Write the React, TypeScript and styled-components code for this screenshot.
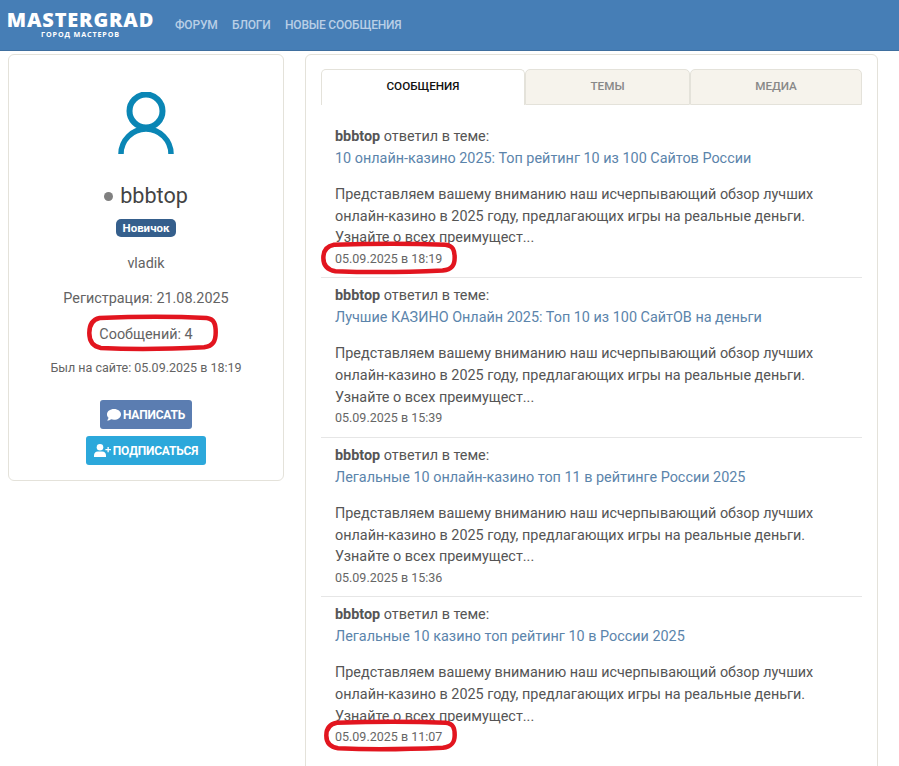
import React from "react";
import styled, { createGlobalStyle } from "styled-components";

const GlobalStyle = createGlobalStyle`
html, body {
  margin: 0;
  padding: 0;
  height: 100%;
  overflow: hidden;
  background: #fff;
}
body {
  font-family: Roboto, "Liberation Sans", sans-serif;
  font-size: 14.4px;
  line-height: 1.5;
  color: #555;
}
* { box-sizing: border-box; }
`;

const Header = styled.header`
  height: 51px;
  background: #467eb6;
  border-bottom: 1px solid #3f6f9f;
  display: flex;
  align-items: flex-start;
  padding-left: 8px;
`;

const Logo = styled.div`
  width: 145px;
  margin-right: 22px;
  padding-top: 10px;
  display: flex;
  flex-direction: column;
  align-items: center;
  color: #fff;
  font-family: "Open Sans", sans-serif;
`;

const LogoName = styled.span`
  font-size: 20px;
  line-height: 20px;
  font-weight: 800;
  letter-spacing: 0.8px;
`;

const LogoTag = styled.span`
  font-size: 7.2px;
  line-height: 9px;
  font-weight: 700;
  letter-spacing: 0.85px;
`;

const Nav = styled.nav`
  display: flex;
  gap: 14.5px;
  padding-top: 16px;
`;

const NavLink = styled.a`
  color: #b9cfe6;
  font-size: 12px;
  line-height: 18px;
  font-weight: 500;
  letter-spacing: -0.2px;
`;

const Page = styled.main`
  display: grid;
  grid-template-columns: 276px 573px;
  column-gap: 21px;
  align-items: start;
  padding: 3px 0 0 8px;
`;

const Card = styled.section`
  background: #fff;
  border: 1px solid #e4e2da;
  border-radius: 6px;
`;

const ProfileCard = styled(Card)`
  height: 427px;
  padding-top: 37px;
  display: flex;
  flex-direction: column;
  align-items: center;
  text-align: center;
  color: #636363;
`;

const Avatar = styled.svg`
  width: 56px;
  height: 62px;
  display: block;
`;

const NameRow = styled.div`
  margin-top: 26px;
  display: flex;
  align-items: center;
  gap: 7px;
  color: #444;
  font-size: 21.6px;
  line-height: 32px;
`;

const StatusDot = styled.span`
  width: 9px;
  height: 9px;
  border-radius: 50%;
  background: #808080;
`;

const Rank = styled.span`
  margin-top: 7px;
  padding: 0 6.5px;
  height: 18px;
  background: #355f8c;
  border-radius: 5px;
  color: #fff;
  font-size: 11.5px;
  line-height: 18px;
  font-weight: 700;
`;

const InfoLine = styled.div<{ $gap: number }>`
  margin-top: ${(p) => p.$gap}px;
  line-height: 22px;
`;

const LastSeen = styled.div`
  margin-top: 12px;
  font-size: 12.5px;
  line-height: 20px;
`;

const Marked = styled.span`
  position: relative;
  display: inline-block;
`;

const Ring = styled.svg<{ $l: number; $t: number; $w: number; $h: number }>`
  position: absolute;
  left: ${(p) => p.$l}px;
  top: ${(p) => p.$t}px;
  width: ${(p) => p.$w}px;
  height: ${(p) => p.$h}px;
  overflow: visible;
  pointer-events: none;
`;

const ActionButton = styled.a<{ $bg: string; $w: number; $mt: number }>`
  margin-top: ${(p) => p.$mt}px;
  width: ${(p) => p.$w}px;
  height: 29px;
  display: flex;
  align-items: center;
  justify-content: center;
  gap: 2px;
  background: ${(p) => p.$bg};
  border-radius: 3px;
  color: #fff;
  font-size: 12px;
  font-weight: 700;
  letter-spacing: -0.2px;
  svg { display: block; }
`;

const FeedCard = styled(Card)`
  height: 760px;
  padding: 14px 15px 0;
`;

const Tabs = styled.div`
  display: grid;
  grid-template-columns: 204px 165px 172px;
  height: 36px;
`;

const Tab = styled.div<{ $active?: boolean }>`
  text-align: center;
  font-size: 11.7px;
  line-height: 32px;
  font-weight: 500;
  border: 1px solid #e4e2da;
  border-bottom-width: ${(p) => (p.$active ? 0 : 1)}px;
  border-radius: 5px 5px 0 0;
  background: ${(p) => (p.$active ? "#fff" : "#f6f3ec")};
  color: ${(p) => (p.$active ? "#111" : "#888")};
`;

const Post = styled.article<{ $last?: boolean }>`
  padding: 7px 14px 9px;
  border-bottom: ${(p) => (p.$last ? "none" : "1px solid #e6e6e6")};
  &:first-of-type { padding-top: 21px; }
`;

const FirstLine = styled.div`
  line-height: 22px;
`;

const PostTitle = styled.a`
  display: block;
  color: #5b84ab;
  line-height: 22px;
`;

const PostText = styled.p`
  margin: 14px 0 0;
  line-height: 21.6px;
  color: #555;
`;

const PostDate = styled.div`
  font-size: 12.5px;
  line-height: 19.7px;
  color: #666;
`;

type RingBox = { l: number; t: number; w: number; h: number };
type PostData = { title: string; date: string; ring?: RingBox };

const posts: PostData[] = [
  { title: "10 онлайн-казино 2025: Топ рейтинг 10 из 100 Сайтов России", date: "05.09.2025 в 18:19", ring: { l: -13, t: -6, w: 134, h: 30 } },
  { title: "Лучшие КАЗИНО Онлайн 2025: Топ 10 из 100 СайтОВ на деньги", date: "05.09.2025 в 15:39" },
  { title: "Легальные 10 онлайн-казино топ 11 в рейтинге России 2025", date: "05.09.2025 в 15:36" },
  { title: "Легальные 10 казино топ рейтинг 10 в России 2025", date: "05.09.2025 в 11:07", ring: { l: -10, t: -6, w: 131, h: 29 } },
];

const excerpt =
  "Представляем вашему вниманию наш исчерпывающий обзор лучших онлайн-казино в 2025 году, предлагающих игры на реальные деньги. Узнайте о всех преимущест...";

// hand-drawn marker loop, stretched to whatever box it circles
function RedRing({ box }: { box: RingBox }) {
  return (
    <Ring $l={box.l} $t={box.t} $w={box.w} $h={box.h} viewBox="0 0 100 100" preserveAspectRatio="none" fill="none">
      <path
        d="M9 6 C35 2 70 2 92 6 C98 9 99 25 99 48 C99 74 97 88 90 92 C60 98 30 98 10 94 C3 89 1 70 1 50 C1 28 3 11 9 6 Z"
        stroke="#e2151f"
        strokeWidth="4.5"
        vectorEffect="non-scaling-stroke"
      />
    </Ring>
  );
}

export default function App() {
  return (
    <>
      <GlobalStyle />
      <Header>
        <Logo>
          <LogoName>MASTERGRAD</LogoName>
          <LogoTag>ГОРОД МАСТЕРОВ</LogoTag>
        </Logo>
        <Nav>
          <NavLink>ФОРУМ</NavLink>
          <NavLink>БЛОГИ</NavLink>
          <NavLink>НОВЫЕ СООБЩЕНИЯ</NavLink>
        </Nav>
      </Header>
      <Page>
        <ProfileCard>
          <Avatar viewBox="0 0 56 62" fill="none" stroke="#0a86b5">
            <circle cx="28" cy="19" r="16.5" strokeWidth="6" />
            <path d="M3 62 A25 25 0 0 1 53 62" strokeWidth="5.5" />
          </Avatar>
          <NameRow>
            <StatusDot />
            bbbtop
          </NameRow>
          <Rank>Новичок</Rank>
          <InfoLine $gap={16}>vladik</InfoLine>
          <InfoLine $gap={13}>Регистрация: 21.08.2025</InfoLine>
          <InfoLine $gap={14}>
            <Marked>
              Сообщений: 4
              <RedRing box={{ l: -11, t: -8, w: 129, h: 34 }} />
            </Marked>
          </InfoLine>
          <LastSeen>Был на сайте: 05.09.2025 в 18:19</LastSeen>
          <ActionButton $bg="#5b7db1" $w={92} $mt={22}>
            <svg width="14" height="12" viewBox="0 0 14 12" fill="#fff">
              <path d="M7 0C3.1 0 0 2.4 0 5.4c0 1.3.6 2.5 1.6 3.4C1.3 9.9.6 10.8.1 11.5c1.500 0 3-.6 4-1.300.9.300 1.900.5 2.900.5 3.900 0 7-2.400 7-5.300S10.900 0 7 0z" />
            </svg>
            НАПИСАТЬ
          </ActionButton>
          <ActionButton $bg="#2ca8db" $w={120} $mt={7}>
            <svg width="17" height="13" viewBox="0 0 17 13" fill="#fff">
              <circle cx="6" cy="3.300" r="3.300" />
              <path d="M0 13v-1.800C0 8.900 1.800 7.400 3.600 7.400h4.800c1.800 0 3.600 1.500 3.600 3.800V13z" />
              <path d="M13.500 3h1.300v1.900H17v1.300h-2.200v2h-1.300v-2h-2.100V4.900h2.100z" />
            </svg>
            ПОДПИСАТЬСЯ
          </ActionButton>
        </ProfileCard>
        <FeedCard>
          <Tabs>
            <Tab $active>СООБЩЕНИЯ</Tab>
            <Tab>ТЕМЫ</Tab>
            <Tab>МЕДИА</Tab>
          </Tabs>
          {posts.map((post, i) => (
            <Post key={post.date} $last={i === posts.length - 1}>
              <FirstLine>
                <b>bbbtop</b> ответил в теме:
              </FirstLine>
              <PostTitle>{post.title}</PostTitle>
              <PostText>{excerpt}</PostText>
              <PostDate>
                {post.ring ? (
                  <Marked>
                    {post.date}
                    <RedRing box={post.ring} />
                  </Marked>
                ) : (
                  post.date
                )}
              </PostDate>
            </Post>
          ))}
        </FeedCard>
      </Page>
    </>
  );
}
